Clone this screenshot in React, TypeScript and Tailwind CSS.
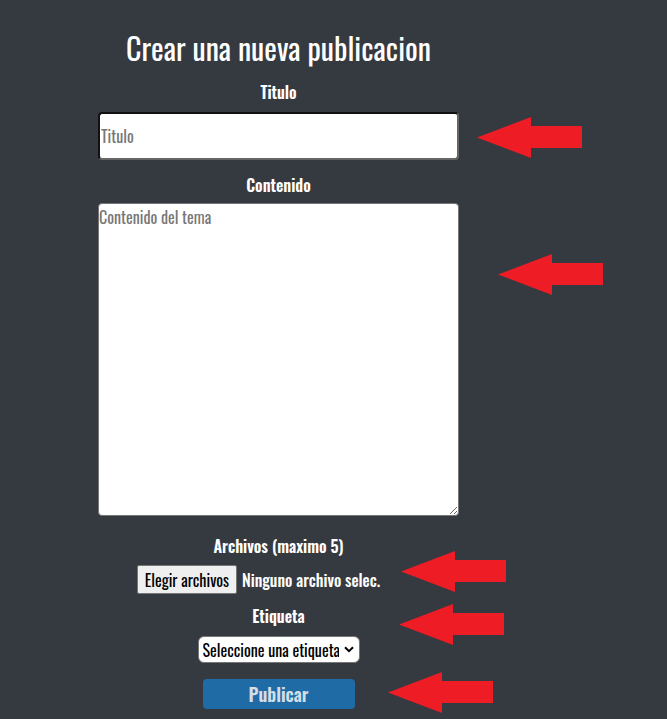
import React from "react";

const font = { fontFamily: '"Oswald", "Liberation Sans Narrow", "DejaVu Sans Condensed", "DejaVu Sans", sans-serif' };

// red annotation arrow, drawn over the page
function Arrow({ left, top }: { left: number; top: number }) {
  return (
    <svg
      className="absolute"
      style={{ left, top }}
      width="106"
      height="41"
      viewBox="0 0 106 41"
    >
      <polygon points="0,20.5 54,0 54,9 105,9 105,31 54,31 54,41" fill="#ee1c24" />
    </svg>
  );
}

export default function App() {
  return (
    <div className="relative min-h-[719px] bg-[#353a41] text-white" style={font}>
      <div className="w-[557px] flex flex-col items-center">
        <h1 className="mt-[30px] text-[30px] leading-[36px] font-normal">
          Crear una nueva publicacion
        </h1>

        <label className="mt-[14px] text-[16px] leading-[24px] font-semibold">Titulo</label>
        <input
          type="text"
          placeholder="Titulo"
          className="mt-[8px] w-[361px] h-[48px] bg-white rounded-[4px] border-2 [border-style:inset] border-[#666] px-[1px] text-[16px] text-black placeholder:text-[#777] outline-none"
          style={font}
        />

        <label className="mt-[13px] text-[16px] leading-[24px] font-semibold">Contenido</label>
        <textarea
          placeholder="Contenido del tema"
          className="mt-[6px] w-[361px] h-[313px] bg-white rounded-[4px] border border-[#767676] px-0 py-[1px] text-[16px] text-black placeholder:text-[#777] outline-none"
          style={font}
        />

        <label className="mt-[18px] text-[16px] leading-[24px] font-semibold">Archivos (maximo 5)</label>
        <div className="mt-[7px] flex items-center gap-[5px] mr-[40px]">
          <button
            className="h-[29px] px-[7px] bg-[#efefef] border border-[#767676] rounded-[2px] text-[16px] text-black"
            style={font}
          >
            Elegir archivos
          </button>
          <span className="text-[16px] font-medium">Ninguno archivo selec.</span>
        </div>

        <label className="mt-[10px] text-[16px] leading-[24px] font-semibold">Etiqueta</label>
        <div className="mt-[8px] relative">
          <select
            className="appearance-none w-[162px] h-[27px] bg-white rounded-[6px] border border-[#767676] pl-[4px] pr-[20px] text-[16px] text-black outline-none"
            style={font}
            defaultValue=""
          >
            <option value="">Seleccione una etiqueta</option>
          </select>
          <svg
            className="absolute right-[6px] top-[10px] pointer-events-none"
            width="10"
            height="7"
            viewBox="0 0 10 7"
          >
            <path d="M1 1.2 L5 5.2 L9 1.2" stroke="#000" strokeWidth="2" fill="none" />
          </svg>
        </div>

        <button
          className="mt-[16px] w-[152px] h-[30px] bg-[#1f6ba6] rounded-[4px] text-[18px] font-semibold text-[#d5dde6]"
          style={font}
        >
          Publicar
        </button>
      </div>

      <Arrow left={477} top={117} />
      <Arrow left={498} top={254} />
      <Arrow left={401} top={551} />
      <Arrow left={399} top={604} />
      <Arrow left={388} top={672} />
    </div>
  );
}
